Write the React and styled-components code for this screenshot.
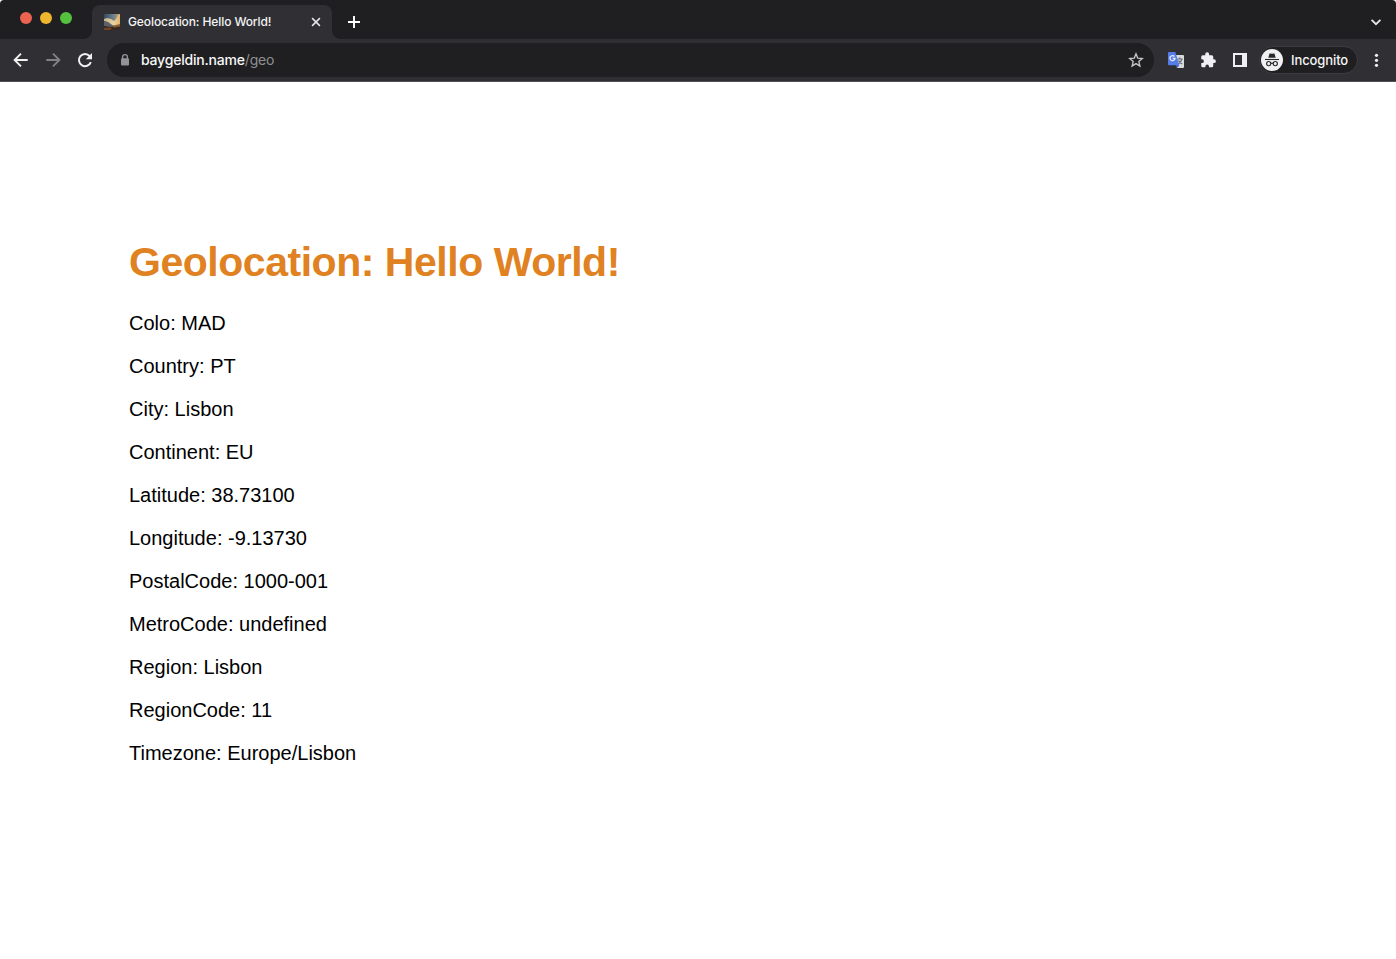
import React from "react";
import styled, { createGlobalStyle } from "styled-components";

const GlobalStyle = createGlobalStyle`
  * { box-sizing: border-box; }
  body { margin: 0; background: #fff; overflow: hidden; }
`;

const Window = styled.div`
  width: 100%;
  height: 100vh;
  display: flex;
  flex-direction: column;
  background: #fff;
  overflow: hidden;
`;

const TabStrip = styled.header`
  height: 39px;
  flex: none;
  display: flex;
  align-items: flex-end;
  padding: 0 10px 0 20px;
  background: #1f1f21;
  border-radius: 4px 4px 0 0;
`;

const TrafficLights = styled.div`
  display: flex;
  gap: 8px;
  width: 72px;
  height: 27px;
`;

const Light = styled.span`
  width: 12px;
  height: 12px;
  border-radius: 50%;
  background: ${(p) => p.$color};
`;

const Tab = styled.div`
  position: relative;
  width: 240px;
  height: 34px;
  display: flex;
  align-items: center;
  padding: 0 10px 0 12px;
  background: #303034;
  border-radius: 8px 8px 0 0;

  &::before,
  &::after {
    content: "";
    position: absolute;
    bottom: 0;
    width: 8px;
    height: 8px;
  }
  &::before {
    left: -8px;
    background: radial-gradient(circle at 0 0, transparent 7.5px, #303034 8px);
  }
  &::after {
    right: -8px;
    background: radial-gradient(circle at 100% 0, transparent 7.5px, #303034 8px);
  }
`;

const TabTitle = styled.span`
  flex: 1;
  margin-left: 8px;
  font: 500 12px/16px Inter, sans-serif;
  letter-spacing: -0.1px;
  color: #f4f4f5;
  white-space: nowrap;
`;

const Icon = styled.svg`
  display: block;
  flex: none;
`;

const StripButton = styled.span`
  display: flex;
  align-items: center;
  height: 34px;
  margin-left: ${(p) => p.$left};
`;

const Toolbar = styled.nav`
  height: 43px;
  flex: none;
  display: flex;
  align-items: center;
  padding: 0 8px 0 11px;
  background: #303034;
  border-bottom: 1px solid #504f53;
`;

const NavButtons = styled.div`
  display: flex;
  gap: 12px;
  width: 96px;
`;

const AddressBar = styled.div`
  width: 1047px;
  height: 34px;
  display: flex;
  align-items: center;
  padding: 0 10px 0 12px;
  border-radius: 17px;
  background: #1f1f21;
`;

const Url = styled.span`
  flex: 1;
  margin-left: 10px;
  font: 500 14px/18px Inter, sans-serif;
  letter-spacing: -0.2px;
  color: #f7f7f8;
`;

const UrlPath = styled.span`
  color: #8f8f93;
  font-weight: 400;
`;

const Extensions = styled.div`
  display: flex;
  gap: 14px;
  margin: 0 10px 0 13px;
`;

const Profile = styled.div`
  width: 99px;
  height: 28px;
  display: flex;
  align-items: center;
  gap: 8px;
  padding-left: 1px;
  border: 1px solid #3d3d41;
  border-radius: 14px;
  background: #1f1f21;
  font: 500 13px/18px Inter, sans-serif;
  letter-spacing: -0.1px;
  color: #f4f4f5;
`;

const Page = styled.main`
  flex: 1;
  padding: 157px 129px 0;
  font-family: "Liberation Sans", Arial, sans-serif;
`;

const Heading = styled.h1`
  margin: 0 0 27px;
  font-size: 41px;
  letter-spacing: -0.47px;
  line-height: 46px;
  color: #e08122;
  white-space: nowrap;
`;

const Detail = styled.p`
  margin: 0 0 20px;
  font-size: 20px;
  line-height: 23px;
  color: #000;
`;

const details = [
  ["Colo", "MAD"],
  ["Country", "PT"],
  ["City", "Lisbon"],
  ["Continent", "EU"],
  ["Latitude", "38.73100"],
  ["Longitude", "-9.13730"],
  ["PostalCode", "1000-001"],
  ["MetroCode", "undefined"],
  ["Region", "Lisbon"],
  ["RegionCode", "11"],
  ["Timezone", "Europe/Lisbon"],
];

const Favicon = () => (
  <Icon width="16" height="16" viewBox="0 0 16 16">
    <defs>
      <linearGradient id="sky" x1="0" y1="0" x2="1" y2="0">
        <stop offset="0" stopColor="#2f4a60" />
        <stop offset=".6" stopColor="#71828a" />
        <stop offset="1" stopColor="#b9a37a" />
      </linearGradient>
      <linearGradient id="cloud" x1="0" y1="0" x2="1" y2="0">
        <stop offset="0" stopColor="#c0b090" />
        <stop offset=".6" stopColor="#ead3a2" />
        <stop offset="1" stopColor="#e0b468" />
      </linearGradient>
    </defs>
    <path d="M0 0h16v16H0z" fill="url(#sky)" />
    <path d="M0 5l3-1 4 1 3 2 2-2 2-4 2-1v11l-4 1-4-1-4-3-4-1z" fill="url(#cloud)" />
    <path d="M0 8l4 .5 4 2.5 3 2-4 1-7-2z" fill="#5d6067" />
    <path d="M0 12l7 1 9-2v5H0z" fill="#38281f" />
    <path d="M0 14l6-.5 2 1L6 16H0z" fill="#704424" />
    <path d="M8 12l8-2v2.5l-6 1z" fill="#8a5f31" />
  </Icon>
);

const ArrowIcon = ({ color, flip }) => (
  <Icon width="20" height="20" viewBox="0 0 20 20">
    <path
      d="M16.7 10H4M10 3.6L3.6 10l6.4 6.4"
      fill="none"
      stroke={color}
      strokeWidth="1.9"
      transform={flip ? "translate(20 0) scale(-1 1)" : undefined}
    />
  </Icon>
);

const ReloadIcon = () => (
  <Icon width="20" height="20" viewBox="0 0 20 20">
    <path d="M15.8 12.1A6.1 6.1 0 1 1 14.7 6.1l1 1.1" fill="none" stroke="#f1f1f2" strokeWidth="2" />
    <path d="M17 3v6.2h-6.2z" fill="#f1f1f2" />
  </Icon>
);

const LockIcon = () => (
  <Icon width="12" height="14" viewBox="0 0 12 14">
    <path d="M3.6 6V4a2.4 2.4 0 0 1 4.8 0v2" fill="none" stroke="#92929a" strokeWidth="1.4" />
    <rect x="2" y="5.2" width="8" height="7.3" rx="1" fill="#92929a" />
  </Icon>
);

const StarIcon = () => (
  <Icon width="16" height="16" viewBox="0 0 16 16">
    <path
      d="M8 1.8l1.7 4.3 4.6.4-3.5 3 1.1 4.5L8 11.6 4.1 14l1.1-4.5-3.5-3 4.6-.4z"
      fill="none"
      stroke="#c8c8ca"
      strokeWidth="1.3"
    />
  </Icon>
);

const TranslateIcon = () => (
  <Icon width="18" height="18" viewBox="0 0 18 18">
    <path d="M7 4h9a1 1 0 0 1 1 1v11a1 1 0 0 1-1 1h-6z" fill="#d9dadd" />
    <path d="M10.2 8h5.3M12.8 6.5V8M15 8c-.4 2-1.7 3.5-3.8 5M11.5 9.5c.8 1.5 2 2.6 3.8 3.6" fill="none" stroke="#5c6973" strokeWidth="1.2" />
    <path d="M2 1h6.3l4 13.2H2a1 1 0 0 1-1-1V2a1 1 0 0 1 1-1z" fill="#557ce8" />
    <path d="M8.6 14.2h3.7L10 17z" fill="#3159c6" />
    <path d="M7.4 5.5A2.5 2.5 0 1 0 8 7.4H5.7" fill="none" stroke="#e8eefc" strokeWidth="1.3" />
  </Icon>
);

const PuzzleIcon = () => (
  <Icon width="18" height="18" viewBox="0 0 24 24">
    <path
      fill="#f0f0f2"
      d="M20 11h-1V7.5a2 2 0 0 0-2-2h-3.5V4.3a2.6 2.6 0 0 0-5.2 0v1.2H5a2 2 0 0 0-2 2V11h1a2.5 2.5 0 0 1 0 5H3v3.5a2 2 0 0 0 2 2h3.5v-1a2.4 2.4 0 0 1 4.8 0v1H17a2 2 0 0 0 2-2V16h1a2.5 2.5 0 0 0 0-5z"
    />
  </Icon>
);

const SidePanelIcon = () => (
  <Icon width="18" height="18" viewBox="0 0 18 18">
    <path d="M2 2h14v14H2zM4 4v10h7V4z" fill="#f0f0f2" fillRule="evenodd" />
  </Icon>
);

const IncognitoIcon = () => (
  <Icon width="22" height="22" viewBox="0 0 22 22">
    <circle cx="11" cy="11" r="11" fill="#f0f0f2" />
    <path d="M7.3 8.8l1.1-3.9q.2-.7.9-.5l1.7.4 1.7-.4q.7-.2.9.5l1.1 3.9z" fill="#29292c" />
    <path d="M4 10.5h14" stroke="#29292c" strokeWidth="1.1" />
    <g fill="none" stroke="#29292c" strokeWidth="1.15">
      <circle cx="7.7" cy="14.6" r="2.1" />
      <circle cx="14.3" cy="14.6" r="2.1" />
      <path d="M9.8 14.4q1.2-.7 2.4 0" />
    </g>
  </Icon>
);

export default function App() {
  return (
    <Window>
      <GlobalStyle />
      <TabStrip>
        <TrafficLights>
          <Light $color="#ec6350" />
          <Light $color="#f0b52f" />
          <Light $color="#55c13f" />
        </TrafficLights>
        <Tab>
          <Favicon />
          <TabTitle>Geolocation: Hello World!</TabTitle>
          <Icon width="12" height="12" viewBox="0 0 12 12">
            <path d="M2.1 2.1l7.8 7.8M9.9 2.1L2.1 9.9" stroke="#e6e6e8" strokeWidth="1.5" />
          </Icon>
        </Tab>
        <StripButton $left="15px">
          <Icon width="14" height="14" viewBox="0 0 14 14">
            <path d="M7 1v12M1 7h12" stroke="#fff" strokeWidth="1.9" />
          </Icon>
        </StripButton>
        <StripButton $left="auto">
          <Icon width="20" height="12" viewBox="0 0 20 12">
            <path d="M5.6 3.8L10 8.2l4.4-4.4" fill="none" stroke="#e8e8ea" strokeWidth="1.8" />
          </Icon>
        </StripButton>
      </TabStrip>
      <Toolbar>
        <NavButtons>
          <ArrowIcon color="#f1f1f2" />
          <ArrowIcon color="#828286" flip />
          <ReloadIcon />
        </NavButtons>
        <AddressBar>
          <LockIcon />
          <Url>
            baygeldin.name<UrlPath>/geo</UrlPath>
          </Url>
          <StarIcon />
        </AddressBar>
        <Extensions>
          <TranslateIcon />
          <PuzzleIcon />
          <SidePanelIcon />
        </Extensions>
        <Profile>
          <IncognitoIcon />
          Incognito
        </Profile>
        <StripButton $left="auto">
          <Icon width="22" height="16" viewBox="0 0 22 16">
            <g fill="#f0f0f2">
              <circle cx="10.5" cy="3.3" r="1.6" />
              <circle cx="10.5" cy="8.3" r="1.6" />
              <circle cx="10.5" cy="13.3" r="1.6" />
            </g>
          </Icon>
        </StripButton>
      </Toolbar>
      <Page>
        <Heading>Geolocation: Hello World!</Heading>
        {details.map(([label, value]) => (
          <Detail key={label}>
            {label}: {value}
          </Detail>
        ))}
      </Page>
    </Window>
  );
}
